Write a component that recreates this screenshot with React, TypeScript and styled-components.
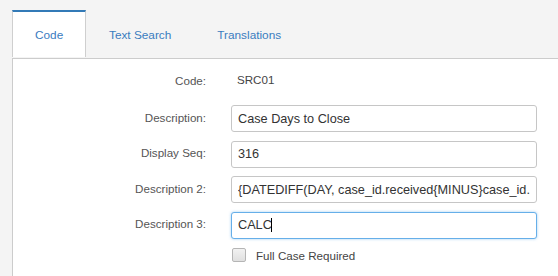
import React from "react";
import styled, { createGlobalStyle, css } from "styled-components";

const Global = createGlobalStyle`
  html, body { margin: 0; padding: 0; background: #f4f4f4; }
  body { font-family: "Liberation Sans", Arial, sans-serif; width: 558px; height: 276px; overflow: hidden; }
  * { box-sizing: border-box; }
`;

const Page = styled.div`
  display: flex;
  flex-direction: column;
  height: 276px;
  padding-left: 12px;
  background: #f4f4f4;
`;

const TabBar = styled.div`
  display: flex;
  padding-top: 10px;
  height: 58px;
`;

const Tab = styled.div<{ $active?: boolean }>`
  height: 47px;
  padding: 0 23px;
  display: flex;
  align-items: center;
  font-size: 11.8px;
  color: #3a7cbf;
  border-top: 2px solid transparent;
  ${(p) =>
    p.$active &&
    css`
      background: #fff;
      border-top-color: #337ab7;
      border-left: 1px solid #cfcfcf;
      border-right: 1px solid #cfcfcf;
      padding: 0 21px 0 22px;
      width: 74px;
    `}
`;

const Panel = styled.div`
  flex: 1;
  background: #fff;
  border-top: 1px solid #cccccc;
  border-left: 1px solid #cccccc;
  padding: 11px 21px 0 0;
`;

const Form = styled.div`
  display: grid;
  grid-template-columns: 193px 1fr;
  column-gap: 25px;
  row-gap: 8.6px;
  align-items: center;
`;

const Label = styled.div<{ $short?: boolean }>`
  text-align: right;
  font-size: 11.6px;
  color: #555;
  margin-top: -3px;
  ${(p) =>
    p.$short &&
    css`
      margin-top: 0;
      margin-bottom: 6.5px;
    `}
`;

const Value = styled.div`
  font-size: 11.6px;
  color: #444;
  padding-left: 6px;
  height: 20px;
  line-height: 20px;
  margin-bottom: 6.5px;
`;

const Input = styled.input<{ $focus?: boolean }>`
  width: 100%;
  height: 27px;
  padding: 0 6px;
  border: 1px solid #c6c6c6;
  border-radius: 3px;
  font-family: "Liberation Sans", Arial, sans-serif;
  font-size: 12.7px;
  color: #333;
  background: #fff;
  outline: none;
  ${(p) =>
    p.$focus &&
    css`
      border-color: #66afe9;
      box-shadow: 0 0 3px rgba(102, 175, 233, 0.6);
    `}
`;

const CheckRow = styled.label`
  grid-column: 2;
  display: flex;
  align-items: center;
  gap: 10px;
  font-size: 11.6px;
  color: #444;
  margin-top: 1px;
`;

const Box = styled.span`
  width: 14px;
  height: 14px;
  border: 1px solid #b5b5b5;
  border-radius: 2px;
  background: linear-gradient(#f2f2f2, #e0e0e0);
  margin-left: 1px;
`;

const Field = styled.div`
  position: relative;
`;

const Caret = styled.span`
  position: absolute;
  left: 40px;
  top: 6px;
  width: 1px;
  height: 14px;
  background: #000;
`;

export default function App() {
  return (
    <>
      <Global />
      <Page>
        <TabBar>
          <Tab $active>Code</Tab>
          <Tab>Text Search</Tab>
          <Tab>Translations</Tab>
        </TabBar>
        <Panel>
          <Form>
            <Label $short>Code:</Label>
            <Value>SRC01</Value>
            <Label>Description:</Label>
            <Input readOnly value="Case Days to Close" />
            <Label>Display Seq:</Label>
            <Input readOnly value="316" />
            <Label>Description 2:</Label>
            <Input readOnly value="{DATEDIFF(DAY, case_id.received{MINUS}case_id.closed)}" />
            <Label>Description 3:</Label>
            <Field>
              <Input readOnly $focus value="CALC" />
              <Caret />
            </Field>
            <CheckRow>
              <Box />
              Full Case Required
            </CheckRow>
          </Form>
        </Panel>
      </Page>
    </>
  );
}
